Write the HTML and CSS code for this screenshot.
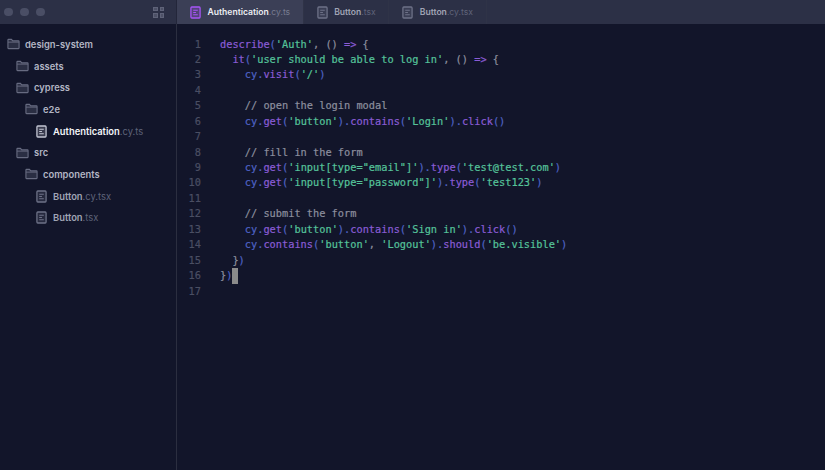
FILE: index.html
```html
<!DOCTYPE html>
<html lang="en">
<head>
<meta charset="utf-8">
<title>Authentication.cy.ts</title>
<link rel="stylesheet" href="styles.css">
</head>
<body>
<svg class="defs" width="0" height="0" aria-hidden="true">
  <symbol id="folder" viewBox="0 0 14 12"><path d="M1.600 1h3.200l1.400 1.600h6.200c.4 0 .6.300.6.600v7.200c0 .4-.3.600-.6.600H1.600c-.4 0-.6-.2-.6-.6V1.600c0-.3.300-.6.600-.6z" fill="#2a2e43" stroke="#676b81" stroke-width="1.200"/><path d="M1 4h12" stroke="#676b81" stroke-width="1"/></symbol>
  <symbol id="file" viewBox="0 0 12 14"><rect x="1" y="1" width="10" height="12" rx="1" fill="currentColor" fill-opacity=".22" stroke="currentColor" stroke-width="1.400"/><path d="M3.500 4.500h5M3.500 7h3M3.500 9.500h5" stroke="currentColor" stroke-width="1.100"/></symbol>
</svg>
<div class="app">
  <header class="topbar">
    <div class="chrome">
      <div class="lights"><i></i><i></i><i></i></div>
      <div class="grid-icon"><i></i><i></i><i></i><i></i></div>
    </div>
    <nav class="tabs">
      <div class="tab active"><svg class="ficon purple"><use href="#file"/></svg><span class="name"><b>Authentication</b>.cy.ts</span></div>
      <div class="tab"><svg class="ficon"><use href="#file"/></svg><span class="name"><b>Button</b>.tsx</span></div>
      <div class="tab"><svg class="ficon"><use href="#file"/></svg><span class="name"><b>Button</b>.cy.tsx</span></div>
    </nav>
  </header>
  <main class="body">
    <aside class="tree">
      <div class="row d0"><svg class="dicon"><use href="#folder"/></svg><span>design-system</span></div>
      <div class="row d1"><svg class="dicon"><use href="#folder"/></svg><span>assets</span></div>
      <div class="row d1"><svg class="dicon"><use href="#folder"/></svg><span>cypress</span></div>
      <div class="row d2"><svg class="dicon"><use href="#folder"/></svg><span>e2e</span></div>
      <div class="row d3 current"><svg class="ficon"><use href="#file"/></svg><span class="name"><b>Authentication</b>.cy.ts</span></div>
      <div class="row d1"><svg class="dicon"><use href="#folder"/></svg><span>src</span></div>
      <div class="row d2"><svg class="dicon"><use href="#folder"/></svg><span>components</span></div>
      <div class="row d3"><svg class="ficon"><use href="#file"/></svg><span class="name"><b>Button</b>.cy.tsx</span></div>
      <div class="row d3"><svg class="ficon"><use href="#file"/></svg><span class="name"><b>Button</b>.tsx</span></div>
    </aside>
    <section class="editor">
<div class="ln"><span class="no">1</span><code><s class="f">describe</s><s class="p">(</s><s class="g">'Auth'</s><s class="c">, () </s><s class="f">=&gt;</s><s class="c"> {</s></code></div>
<div class="ln"><span class="no">2</span><code>  <s class="f">it</s><s class="p">(</s><s class="g">'user should be able to log in'</s><s class="c">, () </s><s class="f">=&gt;</s><s class="c"> {</s></code></div>
<div class="ln"><span class="no">3</span><code>    <s class="p">cy.</s><s class="f">visit</s><s class="p">(</s><s class="g">'/'</s><s class="p">)</s></code></div>
<div class="ln"><span class="no">4</span><code></code></div>
<div class="ln"><span class="no">5</span><code>    <s class="c">// open the login modal</s></code></div>
<div class="ln"><span class="no">6</span><code>    <s class="p">cy.</s><s class="f">get</s><s class="p">(</s><s class="g">'button'</s><s class="p">).</s><s class="f">contains</s><s class="p">(</s><s class="g">'Login'</s><s class="p">).</s><s class="f">click</s><s class="p">()</s></code></div>
<div class="ln"><span class="no">7</span><code></code></div>
<div class="ln"><span class="no">8</span><code>    <s class="c">// fill in the form</s></code></div>
<div class="ln"><span class="no">9</span><code>    <s class="p">cy.</s><s class="f">get</s><s class="p">(</s><s class="g">'input[type="email"]'</s><s class="p">).</s><s class="f">type</s><s class="p">(</s><s class="g">'test@test.com'</s><s class="p">)</s></code></div>
<div class="ln"><span class="no">10</span><code>    <s class="p">cy.</s><s class="f">get</s><s class="p">(</s><s class="g">'input[type="password"]'</s><s class="p">).</s><s class="f">type</s><s class="p">(</s><s class="g">'test123'</s><s class="p">)</s></code></div>
<div class="ln"><span class="no">11</span><code></code></div>
<div class="ln"><span class="no">12</span><code>    <s class="c">// submit the form</s></code></div>
<div class="ln"><span class="no">13</span><code>    <s class="p">cy.</s><s class="f">get</s><s class="p">(</s><s class="g">'button'</s><s class="p">).</s><s class="f">contains</s><s class="p">(</s><s class="g">'Sign in'</s><s class="p">).</s><s class="f">click</s><s class="p">()</s></code></div>
<div class="ln"><span class="no">14</span><code>    <s class="p">cy.</s><s class="f">contains</s><s class="p">(</s><s class="g">'button'</s><s class="c">, </s><s class="g">'Logout'</s><s class="p">).</s><s class="f">should</s><s class="p">(</s><s class="g">'be.visible'</s><s class="p">)</s></code></div>
<div class="ln"><span class="no">15</span><code>  <s class="c">}</s><s class="p">)</s></code></div>
<div class="ln"><span class="no">16</span><code><s class="c">}</s><s class="p">)</s><em class="cursor"></em></code></div>
<div class="ln"><span class="no">17</span><code></code></div>
    </section>
  </main>
</div>
</body>
</html>
```

FILE: styles.css
```css
* { box-sizing: border-box; }
html, body { margin: 0; height: 100%; }
body { background: #12152a; font-family: "Inter", "Liberation Sans", sans-serif; overflow: hidden; }
.defs { position: absolute; }
.app { display: flex; flex-direction: column; height: 470px; }
.topbar { display: flex; height: 24px; background: #2c3046; flex: none; }
.chrome { width: 177px; flex: none; display: flex; align-items: center; justify-content: space-between; padding: 0 12px 0 4px; border-right: 1px solid #23263a; }
.lights { display: flex; gap: 7.500px; }
.lights i { width: 8.500px; height: 8.500px; border-radius: 50%; background: #4a4e65; }
.grid-icon { display: grid; grid-template-columns: 4.500px 4.500px; gap: 2px; }
.grid-icon i { width: 4.500px; height: 4.500px; background: #4d5167; border: 1px solid #5f6379; }
.tabs { display: flex; flex: 1; }
.tab { display: flex; align-items: center; gap: 6.500px; padding: 0 12.500px 0 13px; font-size: 8.600px; color: #8a8ea3; border-right: 1px solid #2f3347; }
.tab.active { background: #3b3f56; }
.ficon { width: 11px; height: 13px; color: #6e7288; flex: none; }
.ficon.purple { color: #a855f7; }
.name { color: #5f6379; font-weight: 400; white-space: nowrap; }
.name b { font-weight: 600; color: #a0a4b5; }
.active .name b { color: #eceef3; }
.tab.active .name { color: #777b90; }
.body { flex: 1; display: flex; min-height: 0; }
.tree { width: 177px; flex: none; padding-top: 9.500px; border-right: 1px solid #2b2e40; }
.row { display: flex; align-items: center; height: 21.700px; gap: 5px; font-size: 9.400px; font-weight: 600; color: #b3b6c4; white-space: nowrap; }
.row .ficon { margin-right: 1px; }
.d0 { padding-left: 7px; }
.d1 { padding-left: 16px; }
.d2 { padding-left: 25px; }
.d3 { padding-left: 36px; }
.dicon { width: 13px; height: 12px; flex: none; }
.current .ficon { color: #c3c6d3; }
.current .name b { color: #f3f4f8; }
.editor { flex: 1; padding-top: 12.500px; font-family: "DejaVu Sans Mono", monospace; font-size: 10.300px; line-height: 15.440px; -webkit-text-stroke: 0.2px; }
.ln { display: flex; height: 15.440px; white-space: pre; }
.no { width: 24px; text-align: right; color: #4a4e63; flex: none; }
.ln code { font: inherit; margin-left: 19px; white-space: pre; display: block; }
.ln s { text-decoration: none; white-space: pre; }
.f { color: #8a5cd6; }
.p { color: #4f63c4; }
.g { color: #55c39a; }
.c { color: #8c8f9e; }
.cursor { display: inline-block; width: 6px; height: 15.500px; background: #8b8b8b; vertical-align: top; }
```
